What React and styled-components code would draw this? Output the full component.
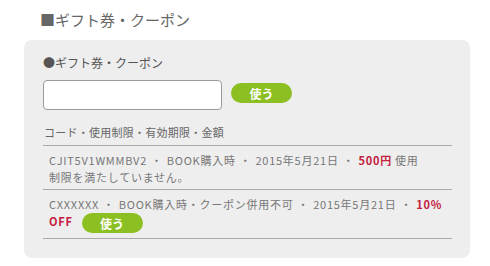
import React from "react";
import styled, { createGlobalStyle } from "styled-components";

const Global = createGlobalStyle`
  html, body { margin: 0; padding: 0; background: #fff; }
  body { font-family: "Noto Sans CJK JP", "Noto Sans", sans-serif; }
`;

const Page = styled.div`
  width: 490px;
  height: 266px;
  padding-top: 9px;
  box-sizing: border-box;
`;

const Title = styled.h2`
  margin: 0 0 9px 40px;
  font-size: 15px;
  line-height: 22px;
  font-weight: 400;
  color: #666;
`;

const Panel = styled.section`
  margin-left: 24px;
  width: 446px;
  box-sizing: border-box;
  background: #eeeeee;
  border-radius: 8px;
  padding: 14px 18px 19px 19px;
`;

const SubTitle = styled.h3`
  margin: 0;
  font-size: 12px;
  line-height: 18px;
  font-weight: 400;
  color: #555;
`;

const InputRow = styled.div`
  display: flex;
  align-items: flex-start;
  gap: 9px;
  margin-top: 8px;
`;

const CodeInput = styled.input`
  width: 179px;
  height: 30px;
  box-sizing: border-box;
  border: 1px solid #9a9a9a;
  border-radius: 4px;
  background: #fff;
  padding: 0 6px;
  outline: none;
`;

const UseButton = styled.button`
  display: inline-flex;
  align-items: center;
  justify-content: center;
  width: 61px;
  height: 20px;
  padding: 0;
  border: none;
  border-radius: 10px;
  background: #8cbf22;
  color: #fff;
  font-family: inherit;
  font-size: 12px;
  font-weight: 700;
  margin-top: ${(p) => (p.$inline ? "0" : "3px")};
  margin-left: ${(p) => (p.$inline ? "9px" : "0")};
  vertical-align: middle;
  cursor: pointer;
`;

const ListHead = styled.div`
  margin-top: 13px;
  padding-left: 1px;
  font-size: 11px;
  line-height: 18px;
  letter-spacing: 0.25px;
  color: #666;
  border-bottom: 1px solid #aaa;
  padding-bottom: 4px;
`;

const Row = styled.div`
  padding: 6px 0 3px 6px;
  font-size: 11px;
  line-height: 17px;
  letter-spacing: 0.75px;
  color: #777;
  border-bottom: 1px solid #aaa;
  padding-bottom: ${(p) => (p.$tall ? "5px" : "3px")};
`;

const Sep = styled.span`
  margin: 0 4px;
`;

const Amount = styled.span`
  color: #c4203f;
  font-weight: 700;
`;

export default function App() {
  return (
    <Page>
      <Global />
      <Title>■ギフト券・クーポン</Title>
      <Panel>
        <SubTitle>●ギフト券・クーポン</SubTitle>
        <InputRow>
          <CodeInput type="text" />
          <UseButton>使う</UseButton>
        </InputRow>
        <ListHead>コード・使用制限・有効期限・金額</ListHead>
        <Row>
          CJIT5V1WMMBV2<Sep>・</Sep>BOOK購入時<Sep>・</Sep>2015年5月21日<Sep>・</Sep>
          <Amount>500円</Amount> 使用
          <br />
          制限を満たしていません。
        </Row>
        <Row $tall>
          CXXXXXX<Sep>・</Sep>BOOK購入時・クーポン併用不可<Sep>・</Sep>2015年5月21日<Sep>・</Sep>
          <Amount>10%</Amount>
          <br />
          <Amount>OFF</Amount>
          <UseButton $inline>使う</UseButton>
        </Row>
      </Panel>
    </Page>
  );
}
